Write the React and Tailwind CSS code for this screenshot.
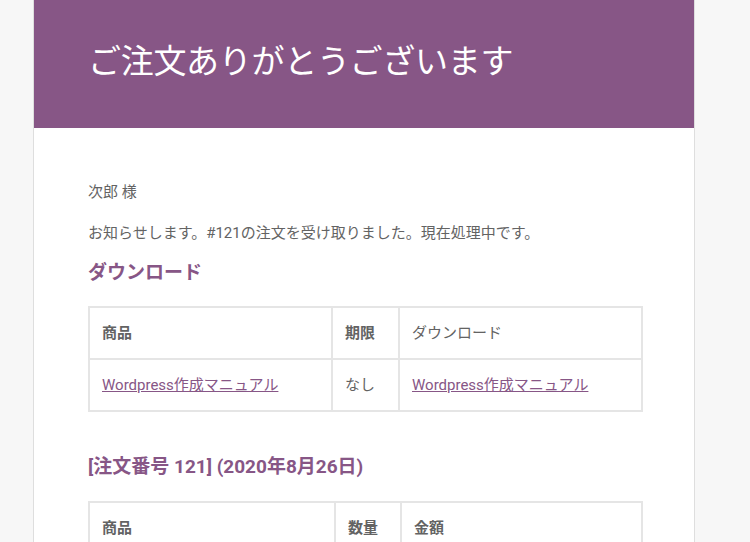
export default function App() {
  const f = { fontFamily: 'Roboto, "Noto Sans CJK JP", sans-serif' };
  const td = "border-2 border-[#e5e5e5] px-[12px] h-[52px] align-middle";
  return (
    <div style={f} className="w-[750px] h-[542px] overflow-hidden bg-[#f7f7f7]">
      <div className="ml-[33px] w-[662px] h-[600px] bg-white border border-[#dedede] border-t-0 rounded-b-[3px]">
        <div className="bg-[#875686] h-[128px] px-[54px] pt-[38px]">
          <h1 className="text-white text-[33px] leading-[48px] font-normal tracking-[-0.3px]">ご注文ありがとうございます</h1>
        </div>
        <div className="px-[54px] pt-[52px] text-[#636363] text-[15px]">
          <p className="leading-[24px]">次郎 様</p>
          <p className="leading-[24px] mt-[17px]">お知らせします。#121の注文を受け取りました。現在処理中です。</p>
          <h2 className="text-[#875686] text-[19px] font-bold leading-[26px] mt-[15px]">ダウンロード</h2>
          <table className="mt-[20px] w-[555px] border-collapse border-2 border-[#e5e5e5]">
            <tbody>
              <tr>
                <td className={td + " w-[243px] font-bold"}>商品</td>
                <td className={td + " w-[67px] font-bold"}>期限</td>
                <td className={td}>ダウンロード</td>
              </tr>
              <tr>
                <td className={td}><span className="text-[#875686] underline">Wordpress作成マニュアル</span></td>
                <td className={td}>なし</td>
                <td className={td}><span className="text-[#875686] underline">Wordpress作成マニュアル</span></td>
              </tr>
            </tbody>
          </table>
          <h2 className="text-[#875686] text-[19px] font-bold leading-[26px] mt-[42px]">[注文番号 121] (2020年8月26日)</h2>
          <table className="mt-[21px] w-[555px] border-collapse border-2 border-[#e5e5e5]">
            <tbody>
              <tr>
                <td className={td + " w-[246px] font-bold"}>商品</td>
                <td className={td + " w-[66px] font-bold"}>数量</td>
                <td className={td + " font-bold"}>金額</td>
              </tr>
            </tbody>
          </table>
        </div>
      </div>
    </div>
  );
}
